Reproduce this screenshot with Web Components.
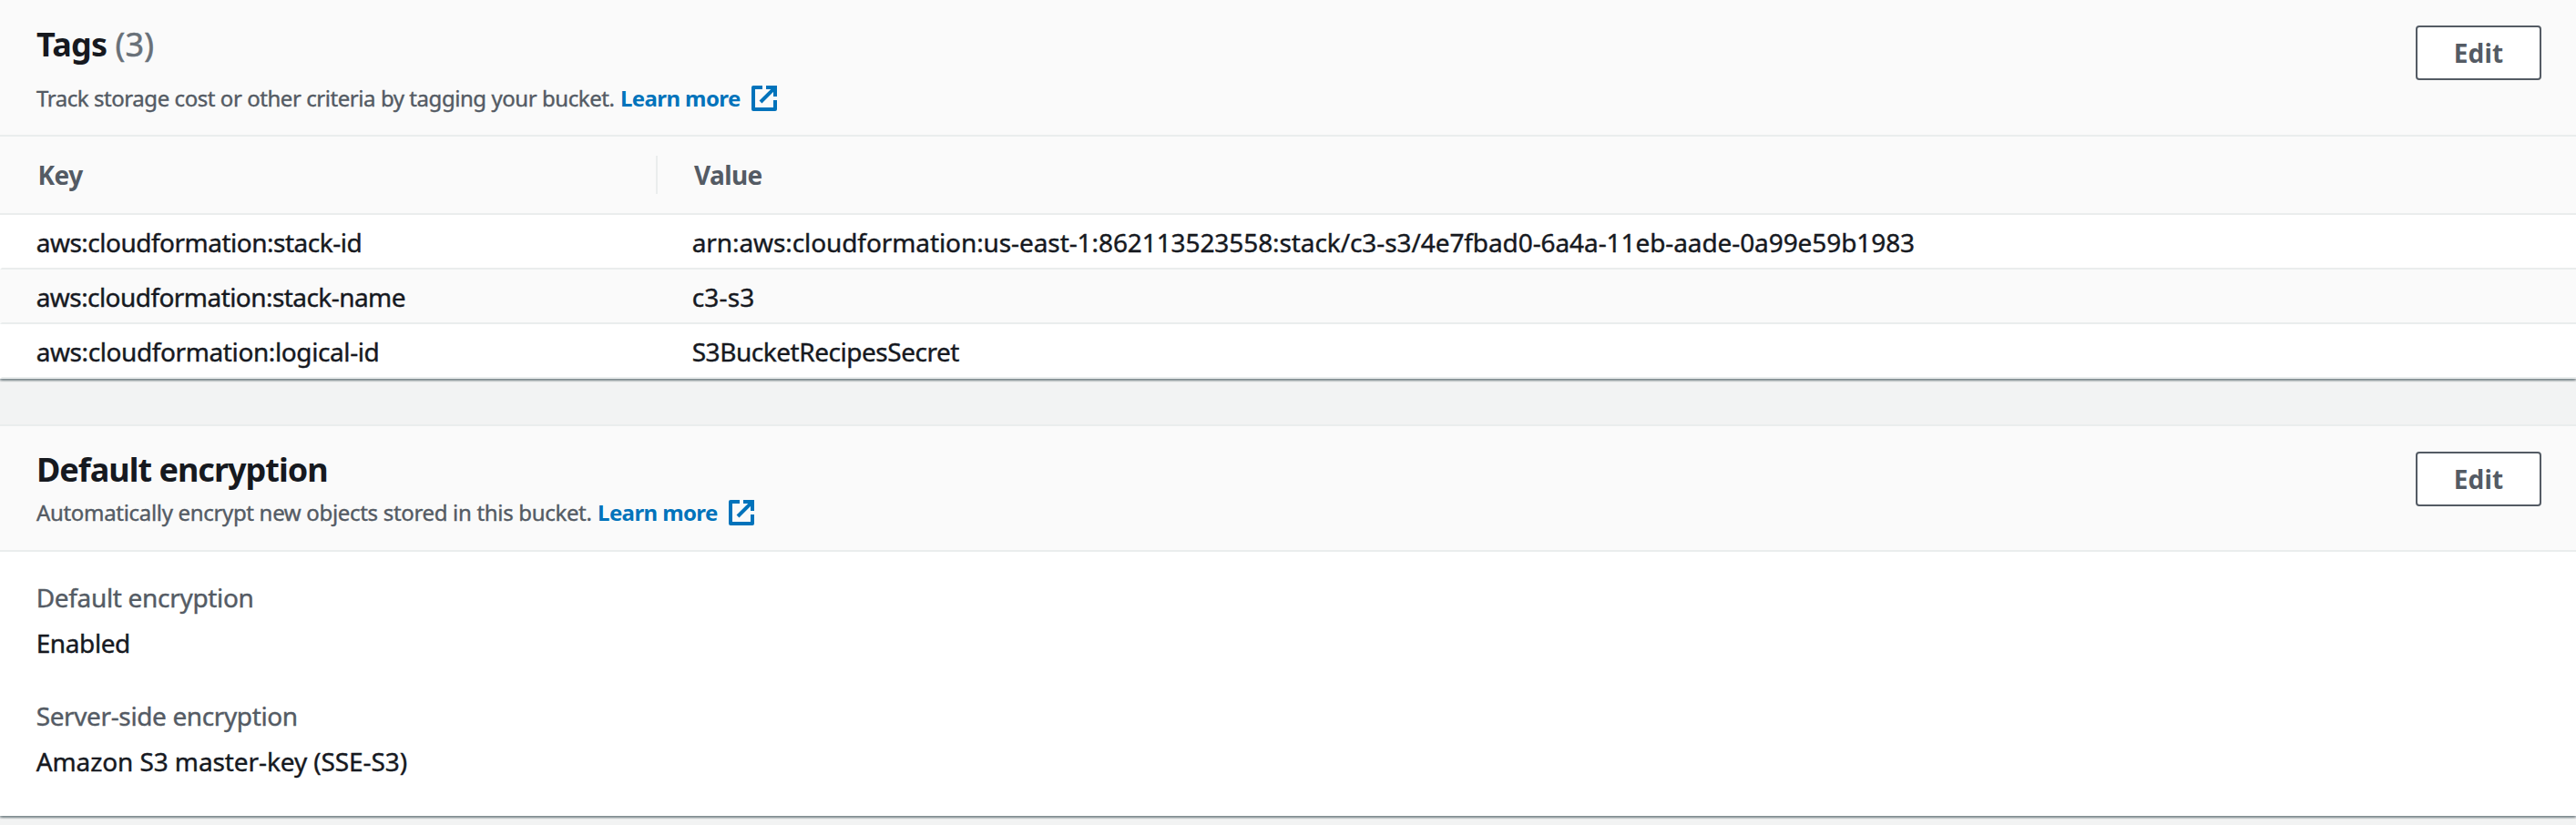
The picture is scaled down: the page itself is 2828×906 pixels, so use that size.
<!DOCTYPE html>
<html lang="en">
<head>
<meta charset="utf-8">
<title>Bucket properties</title>
<style>
  html, body { margin: 0; height: 100%; overflow: hidden; }
  body {
    background: #f2f3f3;
    color: #16191f;
    font: 28px/44px "Noto Sans", sans-serif;
  }
</style>
</head>
<body>
<s3-page>
  <s3-panel>
    <s3-header slot="header" style="--top: 27px; --gap: 19px; --bottom: 22px">
      <s3-text slot="title" track="-0.7">Tags</s3-text>
      <s3-text slot="count" track="0.2">(3)</s3-text>
      <s3-text slot="description" track="-0.44">Track storage cost or other criteria by tagging your bucket.</s3-text>
      <s3-button slot="action">Edit</s3-button>
    </s3-header>
    <s3-table>
      <s3-row head>
        <s3-text track="-0.5">Key</s3-text>
        <s3-text slot="value" track="-0.6">Value</s3-text>
      </s3-row>
      <s3-row>
        <s3-text track="-0.5">aws:cloudformation:stack-id</s3-text>
        <s3-text slot="value" track="-0.09">arn:aws:cloudformation:us-east-1:862113523558:stack/c3-s3/4e7fbad0-6a4a-11eb-aade-0a99e59b1983</s3-text>
      </s3-row>
      <s3-row striped>
        <s3-text track="-0.56">aws:cloudformation:stack-name</s3-text>
        <s3-text slot="value" track="0.2">c3-s3</s3-text>
      </s3-row>
      <s3-row>
        <s3-text track="-0.4">aws:cloudformation:logical-id</s3-text>
        <s3-text slot="value" track="-0.46">S3BucketRecipesSecret</s3-text>
      </s3-row>
    </s3-table>
  </s3-panel>
  <s3-panel bordered>
    <s3-header slot="header" style="--top: 26px; --gap: 7px; --bottom: 23px">
      <s3-text slot="title" track="-1">Default encryption</s3-text>
      <s3-text slot="description" track="-0.32">Automatically encrypt new objects stored in this bucket.</s3-text>
      <s3-button slot="action">Edit</s3-button>
    </s3-header>
    <s3-fields>
      <s3-field>
        <s3-text slot="label" track="-0.32">Default encryption</s3-text>
        <s3-text track="-0.4">Enabled</s3-text>
      </s3-field>
      <s3-field>
        <s3-text slot="label" track="-0.38">Server-side encryption</s3-text>
        <s3-text track="-0.1">Amazon S3 master-key (SSE-S3)</s3-text>
      </s3-field>
    </s3-fields>
  </s3-panel>
</s3-page>

<script>
const define = (name, markup, setup) => {
  const template = document.createElement('template');
  template.innerHTML = markup;
  customElements.define(name, class extends HTMLElement {
    constructor() {
      super();
      this.attachShadow({ mode: 'open' }).append(template.content.cloneNode(true));
    }
    connectedCallback() { if (setup) setup(this); }
  });
};

define('s3-page', `
  <style>
    :host { display: flex; flex-direction: column; gap: 50px; }
  </style>
  <slot></slot>`);

define('s3-panel', `
  <style>
    :host {
      display: block;
      background: #fff;
      box-shadow: 0 2px 2px 0 rgba(0, 28, 36, .3),
                  2px 2px 2px 0 rgba(0, 28, 36, .15),
                  -2px 2px 2px 0 rgba(0, 28, 36, .15);
      -webkit-text-stroke: .4px;
    }
    :host([bordered]) { border-top: 2px solid #eaeded; }
  </style>
  <slot name="header"></slot>
  <slot></slot>`);

/* Text run with its own tracking, in px. */
define('s3-text', `
  <style>:host { display: inline-block; white-space: nowrap; }</style>
  <slot></slot>`,
  el => { el.style.letterSpacing = (el.getAttribute('track') || 0) + 'px'; });

define('s3-button', `
  <style>
    :host { display: block; flex: none; }
    button {
      display: block;
      box-sizing: border-box;
      width: 138px;
      height: 60px;
      margin: 0;
      padding: 0;
      border: 2px solid #545b64;
      border-radius: 4px;
      background: #fff;
      color: #545b64;
      font: 700 28px/56px "Noto Sans", sans-serif;
      letter-spacing: .1px;
    }
  </style>
  <button type="button"><slot></slot></button>`);

define('s3-external-icon', `
  <style>
    :host { display: block; width: 32px; height: 32px; }
    svg { display: block; }
  </style>
  <svg width="32" height="32" viewBox="0 0 16 16" fill="none" stroke="#0073bb" stroke-width="2">
    <path d="M9 2h5v5"/>
    <path d="M6 10l7.6-7.6"/>
    <path d="M14 9v5H2V2h5" stroke-linejoin="round"/>
  </svg>`);

define('s3-header', `
  <style>
    :host {
      display: flex;
      justify-content: space-between;
      align-items: flex-start;
      padding: 0 38px var(--bottom) 40px;
      background: #fafafa;
      border-bottom: 2px solid #eaeded;
    }
    .heading { display: flex; flex-direction: column; gap: var(--gap); padding-top: var(--top); }
    h2 {
      display: flex;
      gap: 9px;
      margin: 0;
      font-size: 36px;
      line-height: 44px;
      font-weight: 700;
      -webkit-text-stroke: 0;
    }
    slot[name="count"] { font-weight: 400; color: #687078; -webkit-text-stroke: .5px; }
    .description {
      display: flex;
      align-items: center;
      height: 36px;
      font-size: 24px;
      line-height: 36px;
      color: #545b64;
    }
    a {
      display: flex;
      align-items: center;
      gap: 10px;
      margin-left: 6.5px;
      color: #0073bb;
      font-weight: 700;
      text-decoration: none;
      -webkit-text-stroke: 0;
    }
    .action { margin-top: 28px; -webkit-text-stroke: 0; }
  </style>
  <div class="heading">
    <h2><slot name="title"></slot><slot name="count"></slot></h2>
    <div class="description">
      <slot name="description"></slot>
      <a><s3-text track="-0.6">Learn more</s3-text><s3-external-icon></s3-external-icon></a>
    </div>
  </div>
  <div class="action"><slot name="action"></slot></div>`);

define('s3-table', `
  <style>:host { display: block; }</style>
  <slot></slot>`);

define('s3-row', `
  <style>
    :host {
      display: grid;
      grid-template-columns: 720px 1fr;
      height: 58px;
      line-height: 60px;
      border-left: 2px solid transparent;
      border-bottom: 2px solid #eaeded;
    }
    .key, .value { padding-left: 37.7px; }
    :host([striped]) { background: #fafafa; }
    :host([head]) {
      height: 84px;
      line-height: 84px;
      border-left: 0;
      background: #fafafa;
      color: #545b64;
      font-weight: 700;
      align-items: center;
      -webkit-text-stroke: 0;
    }
    :host([head]) .key { padding-left: 41.5px; }
    :host([head]) .value {
      height: 42px;
      line-height: 42px;
      padding-left: 40px;
      border-left: 2px solid #eaeded;
    }
  </style>
  <div class="key"><slot></slot></div>
  <div class="value"><slot name="value"></slot></div>`);

define('s3-fields', `
  <style>
    :host {
      display: flex;
      flex-direction: column;
      gap: 36px;
      padding: 28px 39.7px 38px;
    }
  </style>
  <slot></slot>`);

define('s3-field', `
  <style>
    :host { display: flex; flex-direction: column; gap: 6px; line-height: 44px; }
    .label { color: #545b64; }
    div { height: 44px; }
  </style>
  <div class="label"><slot name="label"></slot></div>
  <div><slot></slot></div>`);
</script>
</body>
</html>
